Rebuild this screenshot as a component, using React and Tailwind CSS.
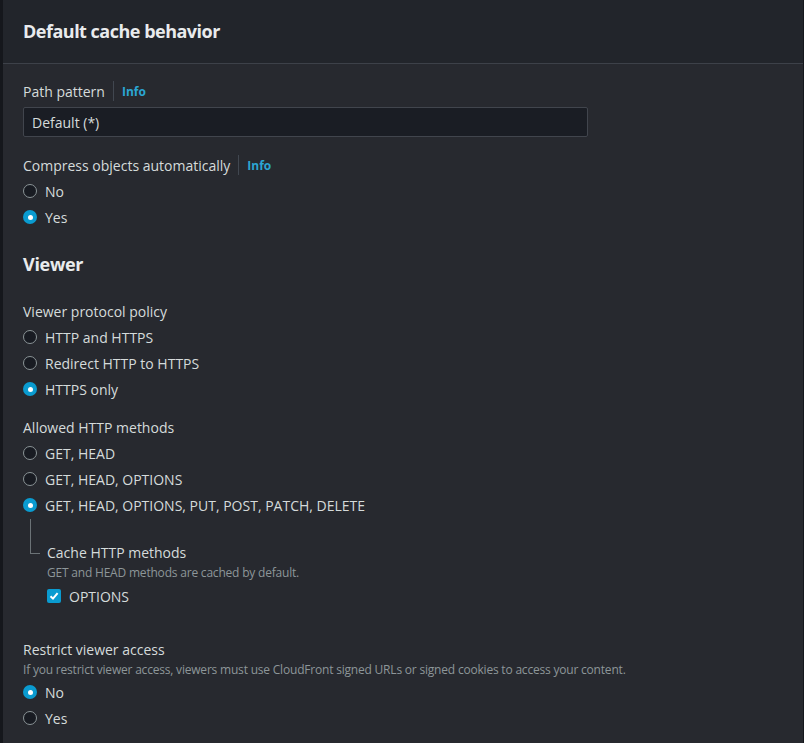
import React, { useState } from 'react';

const font = { fontFamily: '"Open Sans", "Noto Sans", sans-serif' };

function Radio({ checked, label, onClick }) {
  return (
    <div className="flex h-[26px] items-center cursor-pointer" onClick={onClick}>
      {checked ? (
        <span className="flex h-[14px] w-[14px] items-center justify-center rounded-full bg-[#0a9bd0]">
          <span className="h-[5px] w-[5px] rounded-full bg-white" />
        </span>
      ) : (
        <span className="h-[14px] w-[14px] rounded-full border-[1.5px] border-[#8b9497] bg-[#181b22]" />
      )}
      <span className="ml-[8px] text-[14px] text-[#d5dbdb]">{label}</span>
    </div>
  );
}

function RadioGroup({ options, value, onChange, tight }) {
  return (
    <div className={`${tight ? 'mt-[1px]' : 'mt-[2px]'} flex flex-col`}>
      {options.map((o) => (
        <Radio key={o} label={o} checked={value === o} onClick={() => onChange(o)} />
      ))}
    </div>
  );
}

function Label({ children, info }) {
  return (
    <div className="flex h-[22px] items-center text-[14px] text-[#d5dbdb]">
      <span>{children}</span>
      {info && (
        <>
          <span className="mx-[8px] h-[20px] w-px bg-[#414750]" />
          <span className="mt-[2px] text-[12px] font-bold text-[#2ba6d3]">Info</span>
        </>
      )}
    </div>
  );
}

export default function App() {
  const [compress, setCompress] = useState('Yes');
  const [protocol, setProtocol] = useState('HTTPS only');
  const [methods, setMethods] = useState('GET, HEAD, OPTIONS, PUT, POST, PATCH, DELETE');
  const [cacheOptions, setCacheOptions] = useState(true);
  const [restrict, setRestrict] = useState('No');

  return (
    <div className="min-h-screen border-l-[3px] border-r border-l-[#15171c] border-r-[#15171c] bg-[#27292f]" style={font}>
      <div className="flex h-[64px] items-center border-b border-[#3d4149] bg-[#22252b] px-[20px]">
        <h2 className="text-[18px] font-bold tracking-[-0.5px] text-[#e9ebed]">Default cache behavior</h2>
      </div>

      <div className="px-[20px] pt-[16px] pb-[12px]">
        <Label info>Path pattern</Label>
        <div className="mt-[5px] flex h-[30px] w-[565px] items-center rounded-[2px] border border-[#41454d] bg-[#1a1d24] px-[8px] text-[14px] text-[#d5dbdb]">
          Default (*)
        </div>

        <div className="mt-[17px]">
          <Label info>Compress objects automatically</Label>
          <RadioGroup options={['No', 'Yes']} value={compress} onChange={setCompress} />
        </div>

        <h3 className="mt-[22px] h-[24px] text-[18px] leading-[24px] font-bold tracking-[-0.3px] text-[#e9ebed]">Viewer</h3>

        <div className="mt-[24px]">
          <Label>Viewer protocol policy</Label>
          <RadioGroup
            options={['HTTP and HTTPS', 'Redirect HTTP to HTTPS', 'HTTPS only']}
            value={protocol}
            onChange={setProtocol}
          />
        </div>

        <div className="mt-[14px]">
          <Label>Allowed HTTP methods</Label>
          <RadioGroup
            options={['GET, HEAD', 'GET, HEAD, OPTIONS', 'GET, HEAD, OPTIONS, PUT, POST, PATCH, DELETE']}
            value={methods}
            onChange={setMethods}
          />
          <div className="flex">
            <div className="ml-[7px] mt-[1px] h-[35px] w-[10px] border-b border-l border-[#6b7276]" />
            <div className="ml-[7px] pt-[23px]">
              <Label>Cache HTTP methods</Label>
              <div className="mt-[2px] text-[12px] leading-[16px] tracking-[-0.2px] text-[#8d9699]">
                GET and HEAD methods are cached by default.
              </div>
              <div
                className="mt-[4px] flex h-[22px] cursor-pointer items-center"
                onClick={() => setCacheOptions(!cacheOptions)}
              >
                {cacheOptions ? (
                  <span className="flex h-[14px] w-[14px] items-center justify-center rounded-[2px] bg-[#0a9bd0]">
                    <svg width="10" height="10" viewBox="0 0 10 10" fill="none">
                      <path d="M1.5 5.2 L4 7.6 L8.6 2.2" stroke="white" strokeWidth="2" />
                    </svg>
                  </span>
                ) : (
                  <span className="h-[14px] w-[14px] rounded-[2px] border border-[#8b9497]" />
                )}
                <span className="ml-[8px] text-[14px] text-[#d5dbdb]">OPTIONS</span>
              </div>
            </div>
          </div>
        </div>

        <div className="mt-[31px]">
          <Label>Restrict viewer access</Label>
          <div className="mt-[2px] text-[12px] leading-[16px] tracking-[-0.2px] text-[#8d9699]">
            If you restrict viewer access, viewers must use CloudFront signed URLs or signed cookies to access your content.
          </div>
          <RadioGroup options={['No', 'Yes']} value={restrict} onChange={setRestrict} tight />
        </div>
      </div>
    </div>
  );
}
